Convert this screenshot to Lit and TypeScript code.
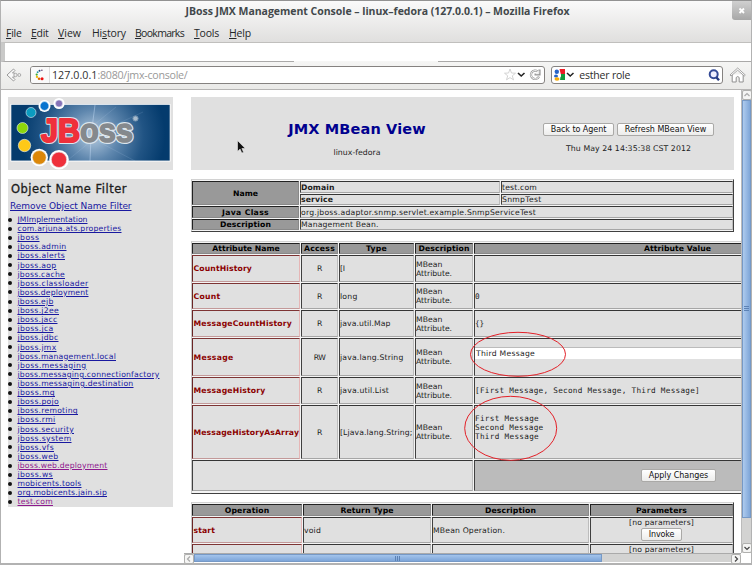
import { LitElement, html, css, svg } from "lit";
import { customElement } from "lit/decorators.js";

/** Text run tracked to a fixed advance width. */
@customElement("fit-text")
class FitText extends LitElement {
  static properties = { w: { type: Number } };
  static styles = css`
    :host { display: inline-block; white-space: pre; }
  `;
  declare w: number;
  render() { return html`<slot></slot>`; }
  updated() {
    this.style.letterSpacing = "0px";
    const n = (this.textContent ?? "").length;
    const natural = this.getBoundingClientRect().width;
    if (this.w && n) this.style.letterSpacing = `${(this.w - natural) / n}px`;
  }
}

const t = (s: string, w: number) => html`<fit-text .w=${w}>${s}</fit-text>`;

const MENU: [string, string, number][] = [
  ["F", "ile", 15.5], ["E", "dit", 17.5], ["V", "iew", 23], ["Hi", "story", 34],
  ["B", "ookmarks", 49], ["T", "ools", 25], ["H", "elp", 22],
];
const FILTERS: [string, number, boolean?][] = [
  ["JMImplementation", 70], ["com.arjuna.ats.properties", 104], ["jboss", 22],
  ["jboss.admin", 49], ["jboss.alerts", 47.5], ["jboss.aop", 39], ["jboss.cache", 47.5],
  ["jboss.classloader", 71], ["jboss.deployment", 71], ["jboss.ejb", 36], ["jboss.j2ee", 41.5],
  ["jboss.jacc", 40], ["jboss.jca", 36], ["jboss.jdbc", 41], ["jboss.jmx", 39],
  ["jboss.management.local", 98.5], ["jboss.messaging", 69], ["jboss.messaging.connectionfactory", 142],
  ["jboss.messaging.destination", 116], ["jboss.mq", 37.5], ["jboss.pojo", 41.5],
  ["jboss.remoting", 60.5], ["jboss.rmi", 38], ["jboss.security", 56.5], ["jboss.system", 54],
  ["jboss.vfs", 36.5], ["jboss.web", 41], ["jboss.web.deployment", 90, true], ["jboss.ws", 35.5],
  ["mobicents.tools", 64], ["org.mobicents.jain.sip", 89.5], ["test.com", 35.5, true],
];
const ATTRS: [string, number, string, string, number, string, number][] = [
  ["CountHistory", 58.5, "R", "[I", 5, "", 0],
  ["Count", 27, "R", "long", 17.5, "0", 5],
  ["MessageCountHistory", 98.5, "R", "java.util.Map", 50.5, "{}", 9],
  ["Message", 40, "RW", "java.lang.String", 63.5, "Third Message", 59],
  ["MessageHistory", 72, "R", "java.util.List", 49, "[First Message, Second Message, Third Message]", 225],
  ["MessageHistoryAsArray", 105.5, "R", "[Ljava.lang.String;", 72.5, "", 0],
];

@customElement("app-root")
class AppRoot extends LitElement {
  static styles = css`
    :host { display: block; width: 752px; height: 565px; overflow: hidden; position: relative; background: #fff;
      font: 8.5px/9px "DejaVu Sans", sans-serif; color: #1c1c1c; }
    * { box-sizing: border-box; }
    .window { height: 565px; display: flex; flex-direction: column; border: solid #b2b2b2; border-width: 1px 1px 2px; border-top-color: #929292; }
    .head { height: 41px; background: linear-gradient(#fafafa, #e0dfde); font-family: "Open Sans", sans-serif; }
    .title { height: 21px; text-align: center; font-weight: 700; font-size: 10.5px; line-height: 21px; color: #42484b; padding-left: 3px; }
    .close { position: absolute; right: 1px; top: 1px; width: 19px; height: 19px; border-radius: 0 0 0 3px; background: linear-gradient(#d0d0d0, #a7a7a7); }
    .menu { display: grid; grid-template-columns: 25px 27px 34px 43px 59px 35px 40px; padding-left: 5px; height: 20px; font-size: 10.5px; line-height: 22px; color: #242729; font-weight: 500; }
    .tabs { height: 20px; border-top: 1px solid #c0bfbd; border-bottom: 1px solid #aaa9a8; border-left: 4px solid #c9c9c8; background: #fff; display: flex; padding-left: 289px; }
    .active { width: 144px; height: 20px; background: linear-gradient(#fff 18px, #f6f6f5 18px); }
    .tools { height: 28px; background: linear-gradient(#f5f5f4, #eaeae8); border-bottom: 1px solid #b6b5b4; display: flex; align-items: flex-start; padding: 4px 5px 0; font-family: "Open Sans", sans-serif; }
    .back { width: 24px; height: 18px; }
    .field { border: 1px solid #858280; border-radius: 3px; height: 18px; background: #fff; display: flex; align-items: center; overflow: hidden; }
    .url { width: 516px; margin-right: 6px; font-size: 10.7px; line-height: 17px; color: #999; }
    .url b { font-weight: 500; color: #303030; }
    .fav { width: 19px; height: 16px; border-right: 1px solid #ddd; margin-right: 2px; background: #fafafa; }
    .grow { flex: 1; }
    .search { width: 172px; font-size: 10.5px; color: #2c2c2c; }
    .home { width: 17px; height: 18px; margin-left: 6px; }
    .page { flex: 1; display: grid; grid-template-columns: 183px 557px 10px; grid-template-rows: 463px 9px; min-height: 0; }
    .side { grid-row: 1 / 3; padding: 7px 0 0 7px; width: 172px; }
    .logo { height: 73px; width: 165px; background: #e0e0e0; display: block; }
    .filter { margin-top: 9px; height: 328px; width: 165px; background: #e0e0e0; }
    .filter h3 { margin: 0; font-size: 11.5px; line-height: 20px; height: 20px; padding-left: 3px; font-weight: 500; -webkit-text-stroke: .3px #1c1c1c; }
    .remove { font-size: 9px; line-height: 15px; height: 16px; padding-left: 2px; color: #1f1fa0; }
    a, a fit-text { color: #1919a0; text-decoration: underline; text-underline-offset: 1px; text-decoration-thickness: 1px; }
    a.v, a.v fit-text { color: #8e188e; }
    ul { list-style: none; margin: 0; padding: 0; }
    li { height: 9.12px; line-height: 9px; font-size: 7.7px; display: flex; align-items: center; }
    li::before { content: ""; width: 4px; height: 4px; border-radius: 50%; background: #111; margin-right: 5.5px; }
    .main { overflow: hidden; padding: 7px 0 0 7px; }
    .banner { width: 543px; height: 73px; background: #e0e0e0; display: grid; grid-template-columns: 332px 211px; }
    .heading { text-align: center; padding-top: 22px; }
    h1 { font-size: 14.5px; line-height: 20px; margin: 0; color: #00008f; }
    .host { font-size: 7.8px; line-height: 27px; }
    .right { padding: 26px 20px 0 0; display: flex; flex-wrap: wrap; align-content: flex-start; justify-content: flex-end; gap: 7px 3px; }
    .date { font-size: 7.8px; width: 100%; text-align: right; padding-right: 23px; line-height: 11px; }
    .btn { display: inline-flex; align-items: center; justify-content: center; height: 13px; border: 1px solid #aaa9a7; border-radius: 2px; background: linear-gradient(#fff, #ececeb); color: #111; font-size: 8px; }
    .wb { width: 71px; } .wr { width: 97px; } .wa { width: 75px; } .wi { width: 41px; }
    .tbl { display: grid; gap: 1px; background: #f4f4f4; border: 1px solid; border-color: #d2d2d2 #404040 #404040 #c8c8c8; padding: 1px 1px 1px 0; font-size: 7.7px; }
    .c { background: #e0e0e0; border: 1px solid; border-color: #353535 #bcbcbc #a6a6a6 #404040; display: flex; align-items: center; overflow: hidden; min-width: 0; }
    .h { background: #999; justify-content: center; font-weight: 700; color: #000; border-color: #222 #888 #888 #222; }
    .r { color: #8b0000; font-weight: 700; border-color: #7d3434 #e6b6b6 #c39999 #6b2525; padding-left: .5px; }
    .m { justify-content: center; }
    .mono { font-family: "DejaVu Sans Mono", monospace; }
    .info { margin-top: 9px; width: 543px; height: 53px; grid-template-columns: 107px 200px 232px; grid-template-rows: 12px 11px 12px 11px; }
    .name { grid-row: span 2; }
    .two { grid-column: span 2; }
    .attrs { margin-top: 9px; width: 890px; height: 253px; grid-template-columns: 108px 37px 75px 58px 1fr; grid-template-rows: 11px 27px 26px 27px 38px 27px 54px 31px; }
    .attrs .av { justify-content: flex-start; padding-left: 169px; }
    .input { align-self: flex-start; margin-top: 8px; background: #fff; width: 100%; height: 12px; line-height: 11px; padding-left: 1px; border-top: 1px solid #bbb; }
    .four { grid-column: span 4; }
    .apply { background: #bbb; padding-left: 166px; }
    .desc { line-height: 9px; }
    .ops { margin-top: 8px; width: 543px; grid-template-columns: 110px 128px 157px 143px; grid-template-rows: 12px 26px 26px; }
    .stack { flex-direction: column; justify-content: flex-start; gap: 1px; line-height: 9px; }
    .b { font-weight: 700; }
    .vs { display: flex; flex-direction: column; background: #d3d3d2; border-left: 1px solid #bbb; }
    .hs { grid-column: 2; display: flex; background: #d3d3d2; border-top: 1px solid #aaa; }
    .sb { width: 10px; height: 10px; flex: none; background: #f5f5f4; border: 1px solid #b0b0ae; border-radius: 2px; display: block; color: #444; }
    .dim { color: #aaa; }
    .vt { height: 418px; background: linear-gradient(90deg, #aecbee, #7fa6d8); border: 1px solid #7699c6; margin-bottom: 25px; display: flex; align-items: center; justify-content: center; }
    .ht { width: 409px; background: linear-gradient(#a3c4ec, #7da5d8); border: 1px solid #7699c6; margin-right: 129px; display: flex; align-items: center; justify-content: center; }
    .marks { position: absolute; left: 0; top: 0; pointer-events: none; }
  `;

  logo() {
    const dots = [
      [51, 6.5, 3.6, "#8673b8"], [36.5, 9, 4.4, "#0874cf"], [23, 15.5, 5, "#0b9bc0"], [14.5, 31, 5.5, "#8cd70c"],
      [16.5, 48.5, 6.2, "#ffc917"], [31.3, 60.5, 6.9, "#dc8708"], [51, 62.8, 7.7, "#ef303b"],
    ] as [number, number, number, string][];
    return html`<svg class="logo" viewBox="0 0 165 73">
      <defs>
        <radialGradient id="sky" gradientUnits="userSpaceOnUse" cx="85" cy="38" r="72">
          <stop offset="0" stop-color="#b7cce0"/><stop offset=".35" stop-color="#5f87ae"/>
          <stop offset=".7" stop-color="#215484"/><stop offset="1" stop-color="#043b6d"/>
        </radialGradient>
      </defs>
      <rect x="2.5" y="7" width="160" height="57.5" fill="#fff"/>
      <rect x="3.3" y="7.8" width="158.4" height="55.8" fill="url(#sky)"/>
      <path d="M87 8 83 39 82 64" stroke="#cfe6ff" stroke-opacity=".5" fill="none" stroke-width=".8"/>
      <path d="M82 31 108 10 M92 35 135 15 M82 45 60 63 M91 45 127 64" stroke="#cfe6ff" stroke-opacity=".12" fill="none"/>
      <circle cx="51" cy="6.500" r="5.600" fill="#fff"/><circle cx="36.500" cy="9" r="6" fill="#fff"/>
      <circle cx="31.300" cy="60.500" r="8.700" fill="#fff"/><circle cx="51" cy="62.800" r="9.800" fill="#fff"/>
      ${dots.map(([x, y, r, f]) => svg`<circle cx=${x} cy=${y} r=${r} fill=${f} stroke="#e8f1f7" stroke-width=".6"/>`)}
      <g font-family="Liberation Sans, sans-serif" font-weight="700" paint-order="stroke" stroke-linejoin="round">
        <g stroke="#dce6ee" stroke-width="4">
          <text x="33" y="44.500" font-size="34" textLength="39" lengthAdjust="spacingAndGlyphs" fill="#ef303b">JB</text>
          <text x="72" y="44.500" font-size="34" textLength="53" lengthAdjust="spacingAndGlyphs" fill="#85898d">oss</text>
        </g>
        <g stroke-width="2">
          <text x="33" y="44.500" font-size="34" textLength="39" lengthAdjust="spacingAndGlyphs" fill="#ef303b" stroke="#ef303b">JB</text>
          <text x="72" y="44.500" font-size="34" textLength="53" lengthAdjust="spacingAndGlyphs" fill="#85898d" stroke="#85898d" stroke-width="1.400">oss</text>
        </g>
      </g>
      <circle cx="127.500" cy="21.500" r="2.600" fill="#a9bccd" stroke="#7493b0"/>
    </svg>`;
  }

  arrow(d: string, dim = false) {
    return html`<svg class="sb ${dim ? "dim" : ""}" viewBox="0 0 8 8"><path d=${d} fill="none" stroke="currentColor" stroke-width="1.2"/></svg>`;
  }

  render() {
    return html`<div class="window">
      <div class="head">
        <div class="title">${t("JBoss JMX Management Console – linux–fedora (127.0.0.1) – Mozilla Firefox", 384)}</div>
        <div class="menu">${MENU.map(([k, rest, w]) => html`<span>${k === "Hi"
          ? html`<fit-text .w=${w}>Hi<u>s</u>tory</fit-text>`
          : html`<fit-text .w=${w}><u>${k}</u>${rest}</fit-text>`}</span>`)}</div>
      </div>
      <svg class="close" viewBox="0 0 19 19"><path d="M7.500 7.500 12 12M12 7.500 7.500 12" stroke="#fff" stroke-width="1.800"/></svg>
      <div class="tabs"><div class="active"></div></div>
      <div class="tools">
        <svg class="back" viewBox="0 0 24 18"><path d="M7.500 3 1 9l6.500 6 1.500-1.500-2.500-2.500h2V7h-2L9 4.500Z" fill="#f9f9f9" stroke="#999"/><circle cx="9.500" cy="9" r="1.700" fill="#eee" stroke="#aaa"/><circle cx="13.300" cy="9" r="1.500" fill="#eee" stroke="#aaa"/></svg>
        <div class="field url">
          <svg class="fav" viewBox="0 0 19 16"><g><circle cx="11.500" cy="3" r=".8" fill="#536"/><circle cx="9" cy="3.500" r="1" fill="#247"/><circle cx="7" cy="5" r="1" fill="#29a"/><circle cx="6" cy="7.500" r="1.200" fill="#4a3"/><circle cx="6.300" cy="10" r="1.200" fill="#eb0"/><circle cx="8.500" cy="12" r="1.400" fill="#d60"/><circle cx="11.700" cy="12" r="1.600" fill="#e11"/></g></svg>
          <b>${t("127.0.0.1", 45.5)}</b>${t(":8080/jmx-console/", 90)}<span class="grow"></span>
          <svg width="41" height="16" viewBox="0 0 41 16"><path d="m7 2 1.500 4 4 .2-3.200 2.600 1.200 4L7 10.600l-3.500 2.200 1.200-4L1.500 6.200l4-.2Z" fill="#fff" stroke="#c9c9c9" stroke-width=".8"/><path d="m15 6 3.200 3L21.500 6" fill="none" stroke="#222" stroke-width="1.600"/><path d="M34.800 4.500A4.200 4.200 0 1 0 36 9.500M36.500 2.500v5h-5" fill="none" stroke="#999" stroke-width="2.200"/><path d="M34.800 4.500A4.200 4.200 0 1 0 36 9.500M35.800 3.500v3.200h-3" fill="none" stroke="#fff" stroke-width=".9"/></svg>
        </div>
        <div class="field search">
          <svg width="27" height="16" viewBox="0 0 27 16"><path d="M7.500 2H13v6H9z" fill="#ee1c25"/><path d="M9 7h4v6H8z" fill="#149b3b"/><circle cx="4.800" cy="4.700" r="2.200" fill="#2864c8"/><ellipse cx="4" cy="9" rx="2" ry="1.500" fill="#2864c8"/><ellipse cx="5" cy="12" rx="2.500" ry="1.700" fill="#f6ad0c"/><path d="M7.500 6.500 9 8v2l-2-1Z" fill="#fff"/><path d="m15 6 3.200 3L21.500 6" fill="none" stroke="#222" stroke-width="1.500"/></svg>
          ${t("esther role", 51)}<span class="grow"></span>
          <svg width="14" height="16" viewBox="0 0 14 16"><circle cx="5.700" cy="7.300" r="4" fill="#eef" stroke="#344a96" stroke-width="2"/><path d="m8.500 10.500 2.500 2.700" stroke="#243880" stroke-width="2.400"/></svg>
        </div>
        <svg class="home" viewBox="0 0 17 18"><path d="M3.200 8.500V16h4v-4.500q1.500-2 3 0V16h4V8.500" fill="#fff" stroke="#8f8f8f"/><path d="M1 9 8.700 2 16.300 9l-1 1-6.600-5.800L2 10Z" fill="#fff" stroke="#8f8f8f" stroke-width=".8"/></svg>
      </div>
      <div class="page">
        <div class="side">
          ${this.logo()}
          <div class="filter">
            <h3>${t("Object Name Filter", 116)}</h3>
            <div class="remove"><a>${t("Remove Object Name Filter", 121.5)}</a></div>
            <ul>${FILTERS.map(([s, w, v]) => html`<li><a class=${v ? "v" : ""}>${t(s, w)}</a></li>`)}</ul>
          </div>
        </div>
        <div class="main">
          <div class="banner">
            <div class="heading"><h1>${t("JMX MBean View", 137.5)}</h1><div class="host">${t("linux-fedora", 47)}</div></div>
            <div class="right">
              <span class="btn wb">${t("Back to Agent", 55.5)}</span><span class="btn wr">${t("Refresh MBean View", 81.5)}</span>
              <div class="date">${t("Thu May 24 14:35:38 CST 2012", 125)}</div>
            </div>
          </div>
          <div class="tbl info">
            <div class="c h name">${t("Name", 25)}</div>
            <div class="c b">${t("Domain", 33.5)}</div><div class="c">${t("test.com", 35)}</div>
            <div class="c b">${t("service", 32)}</div><div class="c">${t("SnmpTest", 39.5)}</div>
            <div class="c h">${t("Java Class", 47)}</div><div class="c two">${t("org.jboss.adaptor.snmp.servlet.example.SnmpServiceTest", 235)}</div>
            <div class="c h">${t("Description", 51)}</div><div class="c two">${t("Management Bean.", 77.5)}</div>
          </div>
          <div class="tbl attrs">
            <div class="c h">${t("Attribute Name", 67.5)}</div><div class="c h">${t("Access", 31)}</div><div class="c h">${t("Type", 21)}</div><div class="c h">${t("Description", 51)}</div><div class="c h av">${t("Attribute Value", 67)}</div>
            ${ATTRS.map(([n, nw, a, ty, tw, v, vw], i) => html`
              <div class="c r">${t(n, nw)}</div><div class="c m">${t(a, a.length === 2 ? 11.5 : 5)}</div><div class="c">${t(ty, tw)}</div>
              <div class="c desc"><div>${t("MBean", 26.5)}<br>${t("Attribute.", 36)}</div></div>
              <div class="c ${i === 3 ? "" : "mono"}">${i === 3 ? html`<div class="input">${t(v, vw)}</div>`
                : i === 5 ? html`<div class="desc">${t("First Message", 64)}<br>${t("Second Message", 68.5)}<br>${t("Third Message", 64)}<br>&nbsp;</div>`
                : v ? t(v, vw) : ""}</div>`)}
            <div class="c four"></div><div class="c apply"><span class="btn wa">${t("Apply Changes", 59.5)}</span></div>
          </div>
          <div class="tbl ops">
            <div class="c h">${t("Operation", 44.5)}</div><div class="c h">${t("Return Type", 53)}</div><div class="c h">${t("Description", 51)}</div><div class="c h">${t("Parameters", 51)}</div>
            <div class="c r">${t("start", 21.5)}</div><div class="c">${t("void", 17)}</div><div class="c">${t("MBean Operation.", 72)}</div>
            <div class="c stack">${t("[no parameters]", 65)}<span class="btn wi">${t("Invoke", 25.5)}</span></div>
            <div class="c r"></div><div class="c"></div><div class="c"></div><div class="c stack">${t("[no parameters]", 65)}</div>
          </div>
        </div>
        <div class="vs">
          ${this.arrow("m1.500 5 2.500-2.500L6.500 5", true)}
          <div class="vt"><svg width="5" height="6"><path d="M0 .5h5M0 2.500h5M0 4.500h5" stroke="#5c82b5"/></svg></div>
          ${this.arrow("m1.500 3 2.500 2.500L6.500 3")}
        </div>
        <div class="hs">
          ${this.arrow("M5 1.500 2.500 4 5 6.500", true)}
          <div class="ht"><svg width="6" height="5"><path d="M.5 0v5M2.500 0v5M4.500 0v5" stroke="#5c82b5"/></svg></div>
          ${this.arrow("m3 1.500 2.500 2.500L3 6.500")}
        </div>
      </div>
      <svg class="marks" width="752" height="565">
        <g fill="none" stroke="#e32028"><ellipse cx="518" cy="354.300" rx="47.500" ry="22"/><ellipse cx="510.700" cy="428.300" rx="46" ry="32"/></g>
        <path d="M237.500 140.500v11l2.600-2.400 1.700 4 1.800-.8-1.700-3.800h3.400Z" fill="#111" stroke="#eee" stroke-width=".6"/>
      </svg>
    </div>`;
  }
}
